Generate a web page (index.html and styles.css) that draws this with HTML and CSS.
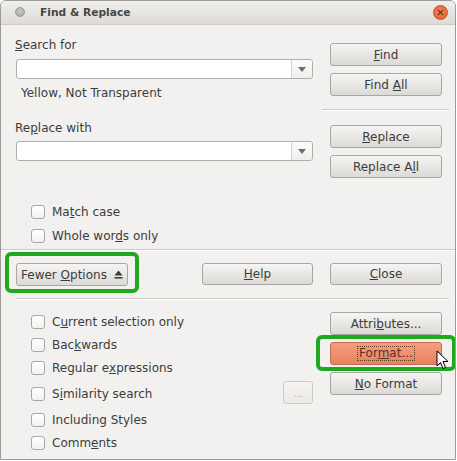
FILE: index.html
```html
<!DOCTYPE html>
<html>
<head>
<meta charset="utf-8">
<link rel="stylesheet" href="styles.css">
</head>
<body>
<div class="window">
  <div class="titlebar">
    <span class="dot"></span>
    <span class="title">Find &amp; Replace</span>
    <span class="close-btn"><svg width="7" height="7" viewBox="0 0 7 7"><path d="M1 1L6 6M6 1L1 6" stroke="#7a2a10" stroke-width="1.2"/></svg></span>
  </div>

  <div class="section top">
    <div class="left">
      <div class="label"><u>S</u>earch for</div>
      <div class="combo combo-first"><div class="combo-field"></div><div class="combo-drop"><span class="tri"></span></div></div>
      <div class="note">Yellow, Not Transparent</div>
      <div class="label label2">Re<u>p</u>lace with</div>
      <div class="combo"><div class="combo-field"></div><div class="combo-drop"><span class="tri"></span></div></div>
      <div class="check first"><span class="box"></span><span>Ma<u>t</u>ch case</span></div>
      <div class="check second"><span class="box"></span><span>Whole wor<u>d</u>s only</span></div>
    </div>
    <div class="right">
      <div class="btn btn-first"><span><u>F</u>ind</span></div>
      <div class="btn"><span>Find <u>A</u>ll</span></div>
      <div class="sep sep-right"></div>
      <div class="btn btn-after-sep"><span><u>R</u>eplace</span></div>
      <div class="btn"><span>Replace A<u>l</u>l</span></div>
    </div>
  </div>

  <div class="sep sep-full"></div>

  <div class="button-row">
    <div class="fewer-wrap">
      <div class="btn btn-fewer"><span>Fewer <u>O</u>ptions</span><svg class="arrow" width="9" height="9" viewBox="0 0 9 9"><path d="M4.5 0.5L8.5 5.5H0.5Z" fill="#3c3c3c"/><rect x="0.5" y="7" width="8" height="1.6" fill="#3c3c3c"/></svg></div>
      <div class="highlight hl-fewer"></div>
    </div>
    <div class="btn btn-help"><span><u>H</u>elp</span></div>
    <div class="btn btn-close"><span><u>C</u>lose</span></div>
  </div>

  <div class="sep sep-inner"></div>

  <div class="section bottom">
    <div class="left">
      <div class="check first2"><span class="box"></span><span>C<u>u</u>rrent selection only</span></div>
      <div class="check"><span class="box"></span><span>Bac<u>k</u>wards</span></div>
      <div class="check"><span class="box"></span><span>Regular e<u>x</u>pressions</span></div>
      <div class="check sim-row">
        <div class="sim-label"><span class="box"></span><span>S<u>i</u>milarity search</span></div>
        <div class="btn btn-dots"><span>...</span></div>
      </div>
      <div class="check"><span class="box"></span><span>Including Styles</span></div>
      <div class="check"><span class="box"></span><span>Comm<u>e</u>nts</span></div>
    </div>
    <div class="right">
      <div class="btn btn-first2"><span>Attri<u>b</u>utes...</span></div>
      <div class="format-wrap">
        <div class="btn btn-format"><span class="focus">For<u>m</u>at...</span></div>
        <div class="highlight hl-format"></div>
        <svg class="cursor" width="13" height="20" viewBox="0 0 13 20"><path d="M1 1V16L4.5 12.5L7 18.5L9.5 17.5L7 11.5H12Z" fill="#fff" stroke="#000" stroke-width="1" stroke-linejoin="round"/></svg>
      </div>
      <div class="btn"><span><u>N</u>o Format</span></div>
    </div>
  </div>
</div>
</body>
</html>
```

FILE: styles.css
```css
* { box-sizing: border-box; }
html, body { margin: 0; padding: 0; background: #ffffff; }
body {
  font-family: "DejaVu Sans", sans-serif;
  font-size: 12px;
  line-height: 14px;
  color: #3c3c3c;
}
u { text-decoration: underline; text-underline-offset: 1px; }

.window {
  position: relative;
  width: 456px;
  height: 460px;
  border: 1px solid #9d9b98;
  border-radius: 6px 6px 0 0;
  background: #f2f1f0;
  overflow: hidden;
}

.titlebar {
  height: 24px;
  display: flex;
  align-items: center;
  background: linear-gradient(#f0efed, #dedbd6);
  border-bottom: 1px solid #cfccc6;
  position: relative;
}
.dot {
  width: 10px;
  height: 10px;
  border-radius: 50%;
  margin-left: 14px;
  margin-top: -1px;
  background: radial-gradient(circle at 50% 40%, #c9c8c5, #a3a29f);
  border: 1px solid #999794;
}
.title {
  margin-left: 15px;
  font-weight: bold;
  font-size: 10.7px;
  color: #474744;
}
.close-btn {
  margin-left: auto;
  margin-right: 7px;
  width: 15px;
  height: 15px;
  border-radius: 50%;
  background: radial-gradient(circle at 50% 45%, #f38f66, #e2653c 70%, #d1562f);
  border: 1px solid #c65330;
  display: flex;
  align-items: center;
  justify-content: center;
}

.section {
  display: grid;
  grid-template-columns: 298px 127px;
  column-gap: 9px;
  padding-left: 14px;
}
.section.top { padding-bottom: 6px; }
.left { display: flex; flex-direction: column; }
.right { display: flex; flex-direction: column; padding-left: 8px; }

.label { margin-top: 13px; height: 14px; }
.label2 { margin-top: 21px; }

.combo {
  margin-top: 6px;
  margin-left: 1px;
  width: 297px;
  height: 20px;
  display: flex;
  border: 1px solid #b1afab;
  border-radius: 3px;
  background: #ffffff;
}
.combo-first { margin-top: 7px; }
.combo-field { flex: 1; }
.combo-drop {
  width: 21px;
  border-left: 1px solid #d4d2ce;
  background: linear-gradient(#fbfbfa, #f0efed);
  border-radius: 0 3px 3px 0;
  display: flex;
  align-items: center;
  justify-content: center;
}
.tri {
  width: 0;
  height: 0;
  border-left: 4px solid transparent;
  border-right: 4px solid transparent;
  border-top: 5px solid #6f6e6b;
  margin-top: 1px;
}

.note { margin-top: 7px; padding-left: 6px; height: 14px; }

.check {
  display: flex;
  align-items: center;
  gap: 7px;
  padding-left: 16px;
  height: 14px;
  margin-top: 9px;
}
.check.first { margin-top: 44px; }
.check.second { margin-top: 10px; }
.box {
  width: 14px;
  height: 14px;
  flex: none;
  border: 1px solid #aaa8a4;
  border-radius: 3px;
  background: linear-gradient(#ffffff, #f3f2f1);
}

.btn {
  width: 112px;
  height: 23px;
  margin-top: 7px;
  border: 1px solid #a9a7a3;
  border-radius: 3px;
  background: linear-gradient(#f6f5f4, #dcdad6);
  display: flex;
  align-items: center;
  justify-content: center;
  flex: none;
}
.btn-first { margin-top: 18px; }
.btn-after-sep { margin-top: 14px; }

.sep {
  height: 2px;
  border-top: 1px solid #cbc9c5;
  border-bottom: 1px solid #ffffff;
}
.sep-right { margin-top: 13px; margin-left: -8px; width: 127px; }
.sep-full { width: 100%; }
.sep-inner { margin-top: 12px; margin-left: 14px; width: 434px; }

.button-row {
  display: flex;
  padding-left: 15px;
  margin-top: 12px;
}
.button-row .btn { margin-top: 0; }
.fewer-wrap { position: relative; }
.btn-fewer {
  justify-content: flex-start;
  padding-left: 4px;
  gap: 7px;
}
.btn-fewer .arrow { margin-top: -1px; }
.btn-help { margin-left: 74px; width: 111px; height: 22px; }
.btn-close { margin-left: 17px; height: 22px; }

.highlight {
  position: absolute;
  border: 4px solid #1fa91f;
  border-radius: 6px;
  pointer-events: none;
}
.hl-fewer { left: -11px; top: -11px; width: 134px; height: 41px; }

.bottom .right .btn-first2 { margin-top: 12px; }
.check.first2 { margin-top: 15px; }
.sim-row {
  height: 23px;
  margin-top: 6px;
  padding-left: 16px;
  justify-content: space-between;
  align-items: stretch;
}
.sim-label { display: flex; align-items: center; gap: 7px; padding-top: 3px; }
.btn-dots {
  width: 30px;
  height: 23px;
  margin-top: 0;
  border-color: #cdcbc7;
  background: linear-gradient(#f6f5f4, #ebe9e6);
  color: #a7a5a1;
  font-size: 9px;
  padding-top: 3px;
}
.sim-row + .check { margin-top: 9px; }

.format-wrap { position: relative; margin-top: 7px; }
.format-wrap .btn { margin-top: 0; }
.btn-format {
  background: linear-gradient(#f49f80, #e7825e);
  border-color: #c56f50;
  color: #5b3122;
}
.focus {
  border: 1px dotted #6b3d2c;
  padding: 0 1px;
  line-height: 13px;
}
.hl-format { left: -14px; top: -7px; width: 140px; height: 36px; }
.cursor { position: absolute; left: 106px; top: 8px; }
```
